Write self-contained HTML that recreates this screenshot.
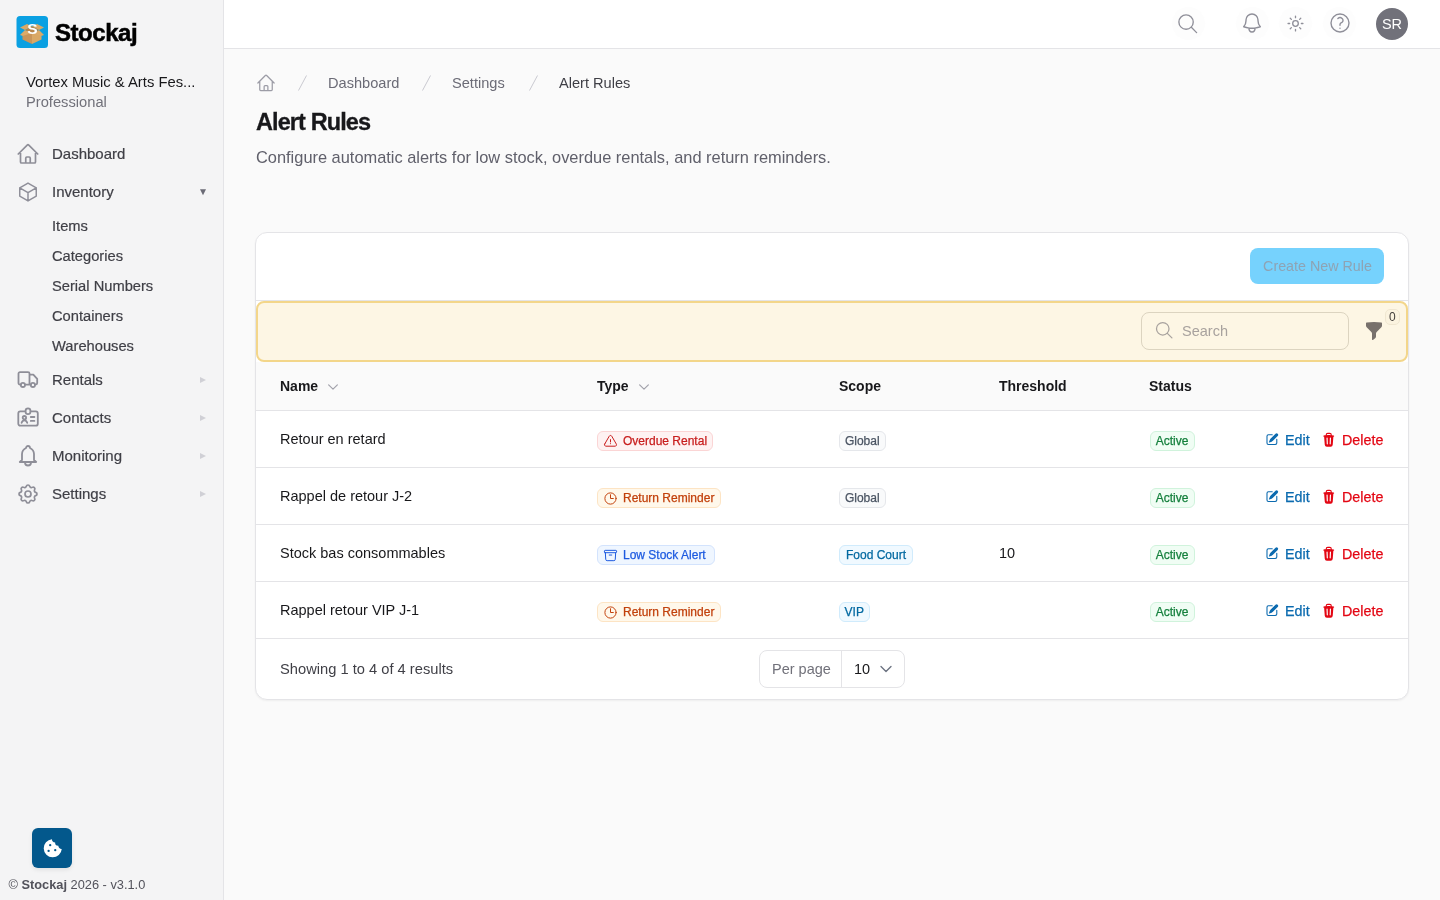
<!DOCTYPE html>
<html><head><meta charset="utf-8">
<style>
*{box-sizing:border-box;margin:0;padding:0}
html,body{width:1440px;height:900px;overflow:hidden}
#wrap{position:absolute;left:0;top:0;width:1440px;height:900px;will-change:transform}
body{font-family:"Liberation Sans",sans-serif;background:#fafafa;color:#18181b;position:relative}
.abs{position:absolute;white-space:nowrap}
svg.abs{overflow:visible}
#sidebar{position:absolute;left:0;top:0;width:224px;height:900px;background:#f4f4f5;border-right:1px solid #e4e4e7}
#topbar{position:absolute;left:224px;top:0;width:1216px;height:49px;background:#fff;border-bottom:1px solid #e4e4e7}
.nav{font-size:15px;color:#3f3f46;-webkit-text-stroke:0.2px currentColor}
.sub{font-size:14.7px;color:#3f3f46;-webkit-text-stroke:0.2px currentColor}
#card{position:absolute;left:255px;top:232px;width:1154px;height:468px;background:#fff;border:1px solid #e4e4e7;border-radius:12px;overflow:hidden;box-shadow:0 1px 2px rgba(0,0,0,0.05)}
.th{font-size:14px;font-weight:bold;color:#18181b}
.td{font-size:14.5px;color:#18181b}
.badge{position:absolute;height:20px;border-radius:6px;font-size:12px;line-height:18px;border:1px solid;white-space:nowrap;-webkit-text-stroke:0.25px currentColor}
.act{font-size:14.3px;-webkit-text-stroke:0.25px currentColor}
</style></head>
<body><div id="wrap">
<div id="sidebar">
<svg class="abs" style="left:16px;top:16px" width="32" height="32" viewBox="0 0 32 32">
<rect x="0.5" y="0" width="31.5" height="32" rx="3.5" fill="#0aa0e2"/>
<polygon points="4,11.5 11,8 16,10.5 9,14" fill="#d9a866"/>
<polygon points="16,10.5 21,8 28,11.5 23,14" fill="#d9a866"/>
<polygon points="4,19 9,14 16,17 11,21.5" fill="#dcaa68"/>
<polygon points="16,17 23,14 28,19 21,21.5" fill="#dcaa68"/>
<polygon points="9,14 16,10.5 23,14 16,17" fill="#b98548"/>
<polygon points="6.5,20 16,17 16,28 6.5,23.5" fill="#c9955a"/>
<polygon points="16,17 25.5,20 25.5,23.5 16,28" fill="#d9a866"/>
<text x="16.4" y="18.2" font-family="Liberation Sans" font-weight="bold" font-size="15.5" text-anchor="middle" fill="#fff">S</text>
</svg>
<div class="abs" style="left:55px;top:19px;font-size:24px;font-weight:bold;color:#000;letter-spacing:-0.45px;-webkit-text-stroke:0.5px #000">Stockaj</div>
<div class="abs" style="left:26px;top:74px;font-size:14.8px;color:#18181b">Vortex Music &amp; Arts Fes...</div>
<div class="abs" style="left:26px;top:94px;font-size:14.7px;color:#71717a">Professional</div>
<svg class="abs" style="left:16px;top:142px" width="24" height="24" viewBox="0 0 24 24" fill="none" stroke="#8e8e98" stroke-width="1.7" stroke-linecap="round" stroke-linejoin="round"><path d="m2.25 12 8.954-8.955c.44-.439 1.152-.439 1.591 0L21.75 12M4.5 9.75v10.125c0 .621.504 1.125 1.125 1.125H9.75v-4.875c0-.621.504-1.125 1.125-1.125h2.25c.621 0 1.125.504 1.125 1.125V21h4.125c.621 0 1.125-.504 1.125-1.125V9.75M8.25 21h8.25"/></svg>
<div class="abs nav" style="left:52px;top:145px">Dashboard</div>
<svg class="abs" style="left:17px;top:181px" width="22" height="22" viewBox="0 0 24 24" fill="none" stroke="#8e8e98" stroke-width="1.6" stroke-linecap="round" stroke-linejoin="round"><path d="m21 7.5-9-5.25L3 7.5m18 0-9 5.25m9-5.25v9l-9 5.25M3 7.5l9 5.25M3 7.5v9l9 5.25m0-9v9"/></svg>
<div class="abs nav" style="left:52px;top:183px">Inventory</div>
<svg class="abs" style="left:200px;top:188.7px" width="6" height="7" viewBox="0 0 6 7"><path d="M0 0.3h6L3 6.3z" fill="#6b6b76"/></svg>
<div class="abs sub" style="left:52px;top:218px">Items</div>
<div class="abs sub" style="left:52px;top:248px">Categories</div>
<div class="abs sub" style="left:52px;top:278px">Serial Numbers</div>
<div class="abs sub" style="left:52px;top:308px">Containers</div>
<div class="abs sub" style="left:52px;top:338px">Warehouses</div>
<div class="abs nav" style="left:52px;top:371px">Rentals</div>
<svg class="abs" style="left:200px;top:377px" width="6" height="6" viewBox="0 0 6 6"><path d="M0 0l6 3-6 3z" fill="#d0d0d6"/></svg>
<div class="abs nav" style="left:52px;top:409px">Contacts</div>
<svg class="abs" style="left:200px;top:415px" width="6" height="6" viewBox="0 0 6 6"><path d="M0 0l6 3-6 3z" fill="#d0d0d6"/></svg>
<div class="abs nav" style="left:52px;top:447px">Monitoring</div>
<svg class="abs" style="left:200px;top:453px" width="6" height="6" viewBox="0 0 6 6"><path d="M0 0l6 3-6 3z" fill="#d0d0d6"/></svg>
<div class="abs nav" style="left:52px;top:485px">Settings</div>
<svg class="abs" style="left:200px;top:491px" width="6" height="6" viewBox="0 0 6 6"><path d="M0 0l6 3-6 3z" fill="#d0d0d6"/></svg>
<svg class="abs" style="left:16px;top:368px" width="24" height="24" viewBox="0 0 24 24" fill="none" stroke="#8e8e98" stroke-width="1.8" stroke-linecap="round" stroke-linejoin="round"><path d="M4.8 16.6H4a1.5 1.5 0 0 1-1.5-1.5V5.6A1.5 1.5 0 0 1 4 4.1h8a1.5 1.5 0 0 1 1.5 1.5v11M8.9 16.6h6M13.5 6.6h3.8l3.9 4.3v4.2a1.5 1.5 0 0 1-1.5 1.5h-.8"/><circle cx="6.9" cy="16.9" r="2.1"/><circle cx="16.9" cy="16.9" r="2.1"/></svg>
<svg class="abs" style="left:16px;top:405px" width="24" height="24" viewBox="0 0 24 24" fill="none" stroke="#8e8e98" stroke-width="1.8" stroke-linecap="round" stroke-linejoin="round"><rect x="2.3" y="6.4" width="19.5" height="14.3" rx="2"/><rect x="9.6" y="3.3" width="4.8" height="5.9" rx="2.4" fill="#f4f4f5"/><circle cx="8.4" cy="12.7" r="1.7"/><path d="M5.6 17.8c.5-1.6 1.5-2.4 2.8-2.4s2.3.8 2.8 2.4M14.8 12h3.6M14.8 15.9h3.6"/></svg>
<svg class="abs" style="left:16px;top:443px" width="24" height="24" viewBox="0 0 24 24" fill="none" stroke="#8e8e98" stroke-width="1.8" stroke-linecap="round" stroke-linejoin="round"><path d="M10 5a2 2 0 1 1 4 0a7 7 0 0 1 4 6v6l2.2 2h-16.4l2.2-2v-6a7 7 0 0 1 4-6M9 19v.5a3 3 0 0 0 6 0v-.5"/></svg>
<svg class="abs" style="left:16px;top:482px" width="24" height="24" viewBox="0 0 24 24" fill="none" stroke="#8e8e98" stroke-width="1.7" stroke-linecap="round" stroke-linejoin="round"><path d="M10.325 4.317c.426 -1.756 2.924 -1.756 3.35 0a1.724 1.724 0 0 0 2.573 1.066c1.543 -.94 3.31 .826 2.37 2.37a1.724 1.724 0 0 0 1.065 2.572c1.756 .426 1.756 2.924 0 3.35a1.724 1.724 0 0 0 -1.066 2.573c.94 1.543 -.826 3.31 -2.37 2.37a1.724 1.724 0 0 0 -2.572 1.065c-.426 1.756 -2.924 1.756 -3.35 0a1.724 1.724 0 0 0 -2.573 -1.066c-1.543 .94 -3.31 -.826 -2.37 -2.37a1.724 1.724 0 0 0 -1.065 -2.572c-1.756 -.426 -1.756 -2.924 0 -3.35a1.724 1.724 0 0 0 1.066 -2.573c-.94 -1.543 .826 -3.31 2.37 -2.37c1 .608 2.296 .07 2.572 -1.065z"/><circle cx="12" cy="12" r="3"/></svg>
<div class="abs" style="left:32px;top:828px;width:40px;height:40px;background:#03588c;border-radius:6px;box-shadow:0 2px 4px rgba(0,0,0,0.08)"></div>
<svg class="abs" style="left:41.5px;top:837.5px" width="21" height="21" viewBox="0 0 20 20"><path d="M9.5 1.2A8.6 8.6 0 1 0 18.8 10.4 3 3 0 0 1 15.6 7.3 3 3 0 0 1 12.5 4.2 3 3 0 0 1 9.5 1.2z" fill="#fff"/><circle cx="7.8" cy="6.8" r="1.1" fill="#03588c"/><circle cx="6.3" cy="12.3" r="1.1" fill="#03588c"/><circle cx="12.6" cy="11.6" r="1.1" fill="#03588c"/></svg>
<div class="abs" style="left:8.5px;top:877px;font-size:12.8px;color:#52525b">© <b>Stockaj</b> 2026 - v3.1.0</div>
</div>
<div id="topbar">
<div class="abs" style="left:947.5px;top:7px;width:33px;height:33px;border-radius:50%;background:#fdfdfd"></div>
<div class="abs" style="left:1011.5px;top:7px;width:33px;height:33px;border-radius:50%;background:#fdfdfd"></div>
<div class="abs" style="left:1054.5px;top:7px;width:33px;height:33px;border-radius:50%;background:#fdfdfd"></div>
<div class="abs" style="left:1098.5px;top:7px;width:33px;height:33px;border-radius:50%;background:#fdfdfd"></div>
<svg class="abs" style="left:952px;top:12px" width="23" height="23" viewBox="0 0 24 24" fill="none" stroke="#8f8f99" stroke-width="1.4" stroke-linecap="round" stroke-linejoin="round"><circle cx="10.5" cy="10.5" r="7.5"/><path d="m16 16 5.5 5.5"/></svg>
<svg class="abs" style="left:1016px;top:11px" width="24" height="24" viewBox="0 0 24 24" fill="none" stroke="#8f8f99" stroke-width="1.4" stroke-linecap="round" stroke-linejoin="round"><path d="M14.857 17.082a23.848 23.848 0 0 0 5.454-1.31A8.967 8.967 0 0 1 18 9.75V9A6 6 0 0 0 6 9v.75a8.967 8.967 0 0 1-2.312 6.022c1.733.64 3.56 1.085 5.455 1.31m5.714 0a24.255 24.255 0 0 1-5.714 0m5.714 0a3 3 0 1 1-5.714 0"/></svg>
<svg class="abs" style="left:1061px;top:13px" width="21" height="21" viewBox="0 0 24 24" fill="none" stroke="#8f8f99" stroke-width="1.5" stroke-linecap="round" stroke-linejoin="round"><circle cx="12" cy="12" r="3.2"/><path d="M12 3.5v1.8M12 18.7v1.8M3.5 12h1.8M18.7 12h1.8M6 6l1.3 1.3M16.7 16.7 18 18M6 18l1.3-1.3M16.7 7.3 18 6"/></svg>
<svg class="abs" style="left:1104px;top:11px" width="24" height="24" viewBox="0 0 24 24" fill="none" stroke="#8f8f99" stroke-width="1.4" stroke-linecap="round" stroke-linejoin="round"><path d="M9.879 7.519c1.171-1.025 3.071-1.025 4.242 0 1.172 1.025 1.172 2.687 0 3.712-.203.179-.43.326-.67.442-.745.361-1.45.999-1.45 1.827v.75M21 12a9 9 0 1 1-18 0 9 9 0 0 1 18 0Zm-9 5.25h.008v.008H12v-.008Z"/></svg>
<div class="abs" style="left:1152px;top:8px;width:32px;height:32px;border-radius:50%;background:#71717a;color:#fff;font-size:14.5px;text-align:center;line-height:32px">SR</div>
</div>
<svg class="abs" style="left:256px;top:73px" width="20" height="20" viewBox="0 0 24 24" fill="none" stroke="#9c9ca6" stroke-width="1.5" stroke-linecap="round" stroke-linejoin="round"><path d="m2.25 12 8.954-8.955c.44-.439 1.152-.439 1.591 0L21.75 12M4.5 9.75v10.125c0 .621.504 1.125 1.125 1.125H9.75v-4.875c0-.621.504-1.125 1.125-1.125h2.25c.621 0 1.125.504 1.125 1.125V21h4.125c.621 0 1.125-.504 1.125-1.125V9.75M8.25 21h8.25"/></svg>
<svg class="abs" style="left:298px;top:75px" width="9" height="16"><path d="M8.5 0.5 0.5 15.5" stroke="#c9c9d0" stroke-width="1"/></svg>
<svg class="abs" style="left:422px;top:75px" width="9" height="16"><path d="M8.5 0.5 0.5 15.5" stroke="#c9c9d0" stroke-width="1"/></svg>
<svg class="abs" style="left:529px;top:75px" width="9" height="16"><path d="M8.5 0.5 0.5 15.5" stroke="#c9c9d0" stroke-width="1"/></svg>
<div class="abs" style="left:328px;top:75px;font-size:14.6px;color:#6b6b76">Dashboard</div>
<div class="abs" style="left:452px;top:75px;font-size:14.6px;color:#6b6b76">Settings</div>
<div class="abs" style="left:559px;top:75px;font-size:14.6px;color:#3f3f46">Alert Rules</div>
<div class="abs" style="left:256px;top:109px;font-size:23.5px;font-weight:bold;color:#18181b;letter-spacing:-0.9px;-webkit-text-stroke:0.3px #18181b">Alert Rules</div>
<div class="abs" style="left:256px;top:148px;font-size:16.4px;color:#60606b">Configure automatic alerts for low stock, overdue rentals, and return reminders.</div>
<div id="card">
<div class="abs" style="left:0;top:67px;width:1152px;height:1px;background:#e4e4e7"></div>
<div class="abs" style="left:994px;top:15px;width:134px;height:36px;background:#76d2fd;border-radius:8px;color:#8ea3b4;font-size:14.3px;line-height:36px;padding-left:1px;text-align:center">Create New Rule</div>
<div class="abs" style="left:0;top:68px;width:1152px;height:61px;background:#fdf6e4;border:2px solid #f3d68a;border-radius:8px"></div>
<div class="abs" style="left:885px;top:79px;width:208px;height:38px;border:1px solid #dcd4c0;border-radius:8px"></div>
<svg class="abs" style="left:898px;top:87px" width="20" height="20" viewBox="0 0 24 24" fill="none" stroke="#a8a29e" stroke-width="1.5" stroke-linecap="round" stroke-linejoin="round"><circle cx="10.5" cy="10.5" r="7.5"/><path d="m16 16 5.5 5.5"/></svg>
<div class="abs" style="left:926px;top:90px;font-size:14.5px;color:#a8a29e">Search</div>
<svg class="abs" style="left:1108px;top:88px" width="20" height="20" viewBox="0 0 20 20" fill="#78716c" stroke="none" stroke-width="1.5" stroke-linecap="round" stroke-linejoin="round"><path d="M2.628 1.601C5.028 1.206 7.49 1 10 1s4.973.206 7.372.601a.75.75 0 0 1 .628.74v2.288a2.25 2.25 0 0 1-.659 1.59l-4.682 4.683a2.25 2.25 0 0 0-.659 1.59v3.037c0 .684-.31 1.33-.844 1.757l-1.937 1.55A.75.75 0 0 1 8 18.25v-5.757a2.25 2.25 0 0 0-.659-1.591L2.659 6.22A2.25 2.25 0 0 1 2 4.629V2.34a.75.75 0 0 1 .628-.74Z"/></svg>
<div class="abs" style="left:1128.5px;top:76px;width:15.5px;height:16px;border-radius:5px;background:#fbf3df;border:1px solid #efe6d0;font-size:12px;line-height:14px;text-align:center;color:#44403c">0</div>
<div class="abs" style="left:0;top:129px;width:1152px;height:49px;background:#fafafa;border-bottom:1px solid #e4e4e7"></div>
<div class="abs th" style="left:24px;top:145px">Name</div>
<div class="abs th" style="left:341px;top:145px">Type</div>
<div class="abs th" style="left:583px;top:145px">Scope</div>
<div class="abs th" style="left:743px;top:145px">Threshold</div>
<div class="abs th" style="left:893px;top:145px">Status</div>
<svg class="abs" style="left:70px;top:147px" width="14" height="14" viewBox="0 0 24 24" fill="none" stroke="#a1a1aa" stroke-width="2" stroke-linecap="round" stroke-linejoin="round"><path d="m19.5 8.25-7.5 7.5-7.5-7.5"/></svg>
<svg class="abs" style="left:381px;top:147px" width="14" height="14" viewBox="0 0 24 24" fill="none" stroke="#a1a1aa" stroke-width="2" stroke-linecap="round" stroke-linejoin="round"><path d="m19.5 8.25-7.5 7.5-7.5-7.5"/></svg>
<div class="abs" style="left:0;top:234px;width:1152px;height:1px;background:#e4e4e7"></div>
<div class="abs td" style="left:24px;top:198px">Retour en retard</div>
<div class="badge" style="left:341px;top:198px;width:116px;background:#fef2f2;border-color:#fbd5d5;color:#c81e1e;padding:0 0 0 25px;text-align:left">Overdue Rental</div><svg class="abs" style="left:347px;top:200.5px" width="15" height="15" viewBox="0 0 24 24" fill="none" stroke="#c81e1e" stroke-width="1.6" stroke-linecap="round" stroke-linejoin="round"><path d="M12 9v3.75m-9.303 3.376c-.866 1.5.217 3.374 1.948 3.374h14.71c1.73 0 2.813-1.874 1.948-3.374L13.949 3.378c-.866-1.5-3.032-1.5-3.898 0L2.697 16.126ZM12 15.75h.007v.008H12v-.008Z"/></svg>
<div class="badge" style="left:583px;top:198px;width:46.5px;background:#f9fafb;border-color:#e5e7eb;color:#4b5563;padding:0;text-align:center">Global</div>
<div class="badge" style="left:893.5px;top:198px;width:45px;background:#f0fdf4;border-color:#d0f3dc;color:#15803d;padding:0;text-align:center">Active</div>
<svg class="abs" style="left:1009px;top:199px" width="14.5" height="14.5" viewBox="0 0 20 20" fill="#0b6aaf" stroke="none" stroke-width="1.5" stroke-linecap="round" stroke-linejoin="round"><path d="M5.433 13.917l1.262-3.155A4 4 0 0 1 7.58 9.42l6.92-6.918a2.121 2.121 0 0 1 3 3l-6.92 6.918c-.383.383-.84.685-1.343.886l-3.154 1.262a.5.5 0 0 1-.65-.65Z"/><path d="M3.5 5.75c0-.69.56-1.25 1.25-1.25H10A.75.75 0 0 0 10 3H4.75A2.75 2.75 0 0 0 2 5.75v9.5A2.75 2.75 0 0 0 4.75 18h9.5A2.75 2.75 0 0 0 17 15.25V10a.75.75 0 0 0-1.5 0v5.25c0 .69-.56 1.25-1.25 1.25h-9.5c-.69 0-1.25-.56-1.25-1.25v-9.5Z"/></svg>
<div class="abs act" style="left:1029px;top:198.5px;color:#0b6aaf">Edit</div>
<svg class="abs" style="left:1065px;top:199px" width="15.5" height="15.5" viewBox="0 0 20 20" fill="#e30613" stroke="none" stroke-width="1.5" stroke-linecap="round" stroke-linejoin="round"><path fill-rule="evenodd" d="M8.75 1A2.75 2.75 0 0 0 6 3.75v.443c-.795.077-1.584.176-2.365.298a.75.75 0 1 0 .23 1.482l.149-.022.841 10.518A2.75 2.75 0 0 0 7.596 19h4.807a2.75 2.75 0 0 0 2.742-2.53l.841-10.52.149.023a.75.75 0 0 0 .23-1.482A41.03 41.03 0 0 0 14 4.193V3.75A2.75 2.75 0 0 0 11.25 1h-2.5ZM10 4c.84 0 1.673.025 2.5.075V3.75c0-.69-.56-1.25-1.25-1.25h-2.5c-.69 0-1.25.56-1.25 1.25v.325C8.327 4.025 9.16 4 10 4ZM8.58 7.72a.75.75 0 0 0-1.5.06l.3 7.5a.75.75 0 1 0 1.5-.06l-.3-7.5Zm4.34.06a.75.75 0 1 0-1.5-.06l-.3 7.5a.75.75 0 1 0 1.5.06l.3-7.5Z" clip-rule="evenodd"/></svg>
<div class="abs act" style="left:1086px;top:198.5px;color:#e30613">Delete</div>
<div class="abs" style="left:0;top:291px;width:1152px;height:1px;background:#e4e4e7"></div>
<div class="abs td" style="left:24px;top:255px">Rappel de retour J-2</div>
<div class="badge" style="left:341px;top:255px;width:124px;background:#fff8eb;border-color:#fde4c4;color:#c2410c;padding:0 0 0 25px;text-align:left">Return Reminder</div><svg class="abs" style="left:347px;top:257.5px" width="15" height="15" viewBox="0 0 24 24" fill="none" stroke="#c2410c" stroke-width="1.6" stroke-linecap="round" stroke-linejoin="round"><path d="M12 6v6h4.5m4.5 0a9 9 0 1 1-18 0 9 9 0 0 1 18 0Z"/></svg>
<div class="badge" style="left:583px;top:255px;width:46.5px;background:#f9fafb;border-color:#e5e7eb;color:#4b5563;padding:0;text-align:center">Global</div>
<div class="badge" style="left:893.5px;top:255px;width:45px;background:#f0fdf4;border-color:#d0f3dc;color:#15803d;padding:0;text-align:center">Active</div>
<svg class="abs" style="left:1009px;top:256px" width="14.5" height="14.5" viewBox="0 0 20 20" fill="#0b6aaf" stroke="none" stroke-width="1.5" stroke-linecap="round" stroke-linejoin="round"><path d="M5.433 13.917l1.262-3.155A4 4 0 0 1 7.58 9.42l6.92-6.918a2.121 2.121 0 0 1 3 3l-6.92 6.918c-.383.383-.84.685-1.343.886l-3.154 1.262a.5.5 0 0 1-.65-.65Z"/><path d="M3.5 5.75c0-.69.56-1.25 1.25-1.25H10A.75.75 0 0 0 10 3H4.75A2.75 2.75 0 0 0 2 5.75v9.5A2.75 2.75 0 0 0 4.75 18h9.5A2.75 2.75 0 0 0 17 15.25V10a.75.75 0 0 0-1.5 0v5.25c0 .69-.56 1.25-1.25 1.25h-9.5c-.69 0-1.25-.56-1.25-1.25v-9.5Z"/></svg>
<div class="abs act" style="left:1029px;top:255.5px;color:#0b6aaf">Edit</div>
<svg class="abs" style="left:1065px;top:256px" width="15.5" height="15.5" viewBox="0 0 20 20" fill="#e30613" stroke="none" stroke-width="1.5" stroke-linecap="round" stroke-linejoin="round"><path fill-rule="evenodd" d="M8.75 1A2.75 2.75 0 0 0 6 3.75v.443c-.795.077-1.584.176-2.365.298a.75.75 0 1 0 .23 1.482l.149-.022.841 10.518A2.75 2.75 0 0 0 7.596 19h4.807a2.75 2.75 0 0 0 2.742-2.53l.841-10.52.149.023a.75.75 0 0 0 .23-1.482A41.03 41.03 0 0 0 14 4.193V3.75A2.75 2.75 0 0 0 11.25 1h-2.5ZM10 4c.84 0 1.673.025 2.5.075V3.75c0-.69-.56-1.25-1.25-1.25h-2.5c-.69 0-1.25.56-1.25 1.25v.325C8.327 4.025 9.16 4 10 4ZM8.58 7.72a.75.75 0 0 0-1.5.06l.3 7.5a.75.75 0 1 0 1.5-.06l-.3-7.5Zm4.34.06a.75.75 0 1 0-1.5-.06l-.3 7.5a.75.75 0 1 0 1.5.06l.3-7.5Z" clip-rule="evenodd"/></svg>
<div class="abs act" style="left:1086px;top:255.5px;color:#e30613">Delete</div>
<div class="abs" style="left:0;top:348px;width:1152px;height:1px;background:#e4e4e7"></div>
<div class="abs td" style="left:24px;top:312px">Stock bas consommables</div>
<div class="badge" style="left:341px;top:312px;width:118px;background:#eff6ff;border-color:#d3e3fd;color:#1d5ae0;padding:0 0 0 25px;text-align:left">Low Stock Alert</div><svg class="abs" style="left:347px;top:314.5px" width="15" height="15" viewBox="0 0 24 24" fill="none" stroke="#1d5ae0" stroke-width="1.6" stroke-linecap="round" stroke-linejoin="round"><path d="m20.25 7.5-.625 10.632a2.25 2.25 0 0 1-2.247 2.118H6.622a2.25 2.25 0 0 1-2.247-2.118L3.75 7.5M10 11.25h4M3.375 7.5h17.25c.621 0 1.125-.504 1.125-1.125v-1.5c0-.621-.504-1.125-1.125-1.125H3.375c-.621 0-1.125.504-1.125 1.125v1.5c0 .621.504 1.125 1.125 1.125Z"/></svg>
<div class="badge" style="left:583px;top:312px;width:74px;background:#f0f9ff;border-color:#d0ebfc;color:#0369a1;padding:0;text-align:center">Food Court</div>
<div class="abs td" style="left:743px;top:312px">10</div>
<div class="badge" style="left:893.5px;top:312px;width:45px;background:#f0fdf4;border-color:#d0f3dc;color:#15803d;padding:0;text-align:center">Active</div>
<svg class="abs" style="left:1009px;top:313px" width="14.5" height="14.5" viewBox="0 0 20 20" fill="#0b6aaf" stroke="none" stroke-width="1.5" stroke-linecap="round" stroke-linejoin="round"><path d="M5.433 13.917l1.262-3.155A4 4 0 0 1 7.58 9.42l6.92-6.918a2.121 2.121 0 0 1 3 3l-6.92 6.918c-.383.383-.84.685-1.343.886l-3.154 1.262a.5.5 0 0 1-.65-.65Z"/><path d="M3.5 5.75c0-.69.56-1.25 1.25-1.25H10A.75.75 0 0 0 10 3H4.75A2.75 2.75 0 0 0 2 5.75v9.5A2.75 2.75 0 0 0 4.75 18h9.5A2.75 2.75 0 0 0 17 15.25V10a.75.75 0 0 0-1.5 0v5.25c0 .69-.56 1.25-1.25 1.25h-9.5c-.69 0-1.25-.56-1.25-1.25v-9.5Z"/></svg>
<div class="abs act" style="left:1029px;top:312.5px;color:#0b6aaf">Edit</div>
<svg class="abs" style="left:1065px;top:313px" width="15.5" height="15.5" viewBox="0 0 20 20" fill="#e30613" stroke="none" stroke-width="1.5" stroke-linecap="round" stroke-linejoin="round"><path fill-rule="evenodd" d="M8.75 1A2.75 2.75 0 0 0 6 3.75v.443c-.795.077-1.584.176-2.365.298a.75.75 0 1 0 .23 1.482l.149-.022.841 10.518A2.75 2.75 0 0 0 7.596 19h4.807a2.75 2.75 0 0 0 2.742-2.53l.841-10.52.149.023a.75.75 0 0 0 .23-1.482A41.03 41.03 0 0 0 14 4.193V3.75A2.75 2.75 0 0 0 11.25 1h-2.5ZM10 4c.84 0 1.673.025 2.5.075V3.75c0-.69-.56-1.25-1.25-1.25h-2.5c-.69 0-1.25.56-1.25 1.25v.325C8.327 4.025 9.16 4 10 4ZM8.58 7.72a.75.75 0 0 0-1.5.06l.3 7.5a.75.75 0 1 0 1.5-.06l-.3-7.5Zm4.34.06a.75.75 0 1 0-1.5-.06l-.3 7.5a.75.75 0 1 0 1.5.06l.3-7.5Z" clip-rule="evenodd"/></svg>
<div class="abs act" style="left:1086px;top:312.5px;color:#e30613">Delete</div>
<div class="abs" style="left:0;top:405px;width:1152px;height:1px;background:#e4e4e7"></div>
<div class="abs td" style="left:24px;top:369px">Rappel retour VIP J-1</div>
<div class="badge" style="left:341px;top:369px;width:124px;background:#fff8eb;border-color:#fde4c4;color:#c2410c;padding:0 0 0 25px;text-align:left">Return Reminder</div><svg class="abs" style="left:347px;top:371.5px" width="15" height="15" viewBox="0 0 24 24" fill="none" stroke="#c2410c" stroke-width="1.6" stroke-linecap="round" stroke-linejoin="round"><path d="M12 6v6h4.5m4.5 0a9 9 0 1 1-18 0 9 9 0 0 1 18 0Z"/></svg>
<div class="badge" style="left:583px;top:369px;width:30.5px;background:#f0f9ff;border-color:#d0ebfc;color:#0369a1;padding:0;text-align:center">VIP</div>
<div class="badge" style="left:893.5px;top:369px;width:45px;background:#f0fdf4;border-color:#d0f3dc;color:#15803d;padding:0;text-align:center">Active</div>
<svg class="abs" style="left:1009px;top:370px" width="14.5" height="14.5" viewBox="0 0 20 20" fill="#0b6aaf" stroke="none" stroke-width="1.5" stroke-linecap="round" stroke-linejoin="round"><path d="M5.433 13.917l1.262-3.155A4 4 0 0 1 7.58 9.42l6.92-6.918a2.121 2.121 0 0 1 3 3l-6.92 6.918c-.383.383-.84.685-1.343.886l-3.154 1.262a.5.5 0 0 1-.65-.65Z"/><path d="M3.5 5.75c0-.69.56-1.25 1.25-1.25H10A.75.75 0 0 0 10 3H4.75A2.75 2.75 0 0 0 2 5.75v9.5A2.75 2.75 0 0 0 4.75 18h9.5A2.75 2.75 0 0 0 17 15.25V10a.75.75 0 0 0-1.5 0v5.25c0 .69-.56 1.25-1.25 1.25h-9.5c-.69 0-1.25-.56-1.25-1.25v-9.5Z"/></svg>
<div class="abs act" style="left:1029px;top:369.5px;color:#0b6aaf">Edit</div>
<svg class="abs" style="left:1065px;top:370px" width="15.5" height="15.5" viewBox="0 0 20 20" fill="#e30613" stroke="none" stroke-width="1.5" stroke-linecap="round" stroke-linejoin="round"><path fill-rule="evenodd" d="M8.75 1A2.75 2.75 0 0 0 6 3.75v.443c-.795.077-1.584.176-2.365.298a.75.75 0 1 0 .23 1.482l.149-.022.841 10.518A2.75 2.75 0 0 0 7.596 19h4.807a2.75 2.75 0 0 0 2.742-2.53l.841-10.52.149.023a.75.75 0 0 0 .23-1.482A41.03 41.03 0 0 0 14 4.193V3.75A2.75 2.75 0 0 0 11.25 1h-2.5ZM10 4c.84 0 1.673.025 2.5.075V3.75c0-.69-.56-1.25-1.25-1.25h-2.5c-.69 0-1.25.56-1.25 1.25v.325C8.327 4.025 9.16 4 10 4ZM8.58 7.72a.75.75 0 0 0-1.5.06l.3 7.5a.75.75 0 1 0 1.5-.06l-.3-7.5Zm4.34.06a.75.75 0 1 0-1.5-.06l-.3 7.5a.75.75 0 1 0 1.5.06l.3-7.5Z" clip-rule="evenodd"/></svg>
<div class="abs act" style="left:1086px;top:369.5px;color:#e30613">Delete</div>
<div class="abs" style="left:24px;top:428px;font-size:14.7px;color:#3f3f46">Showing 1 to 4 of 4 results</div>
<div class="abs" style="left:503px;top:417px;width:146px;height:38px;border:1px solid #e4e4e7;border-radius:8px"></div>
<div class="abs" style="left:585px;top:418px;width:1px;height:36px;background:#e4e4e7"></div>
<div class="abs" style="left:516px;top:428px;font-size:14.5px;color:#71717a">Per page</div>
<div class="abs" style="left:598px;top:428px;font-size:14.5px;color:#18181b">10</div>
<svg class="abs" style="left:621.5px;top:427.5px" width="16" height="16" viewBox="0 0 24 24" fill="none" stroke="#6b7280" stroke-width="2" stroke-linecap="round" stroke-linejoin="round"><path d="m19.5 8.25-7.5 7.5-7.5-7.5"/></svg>
</div>
</div></body></html>
